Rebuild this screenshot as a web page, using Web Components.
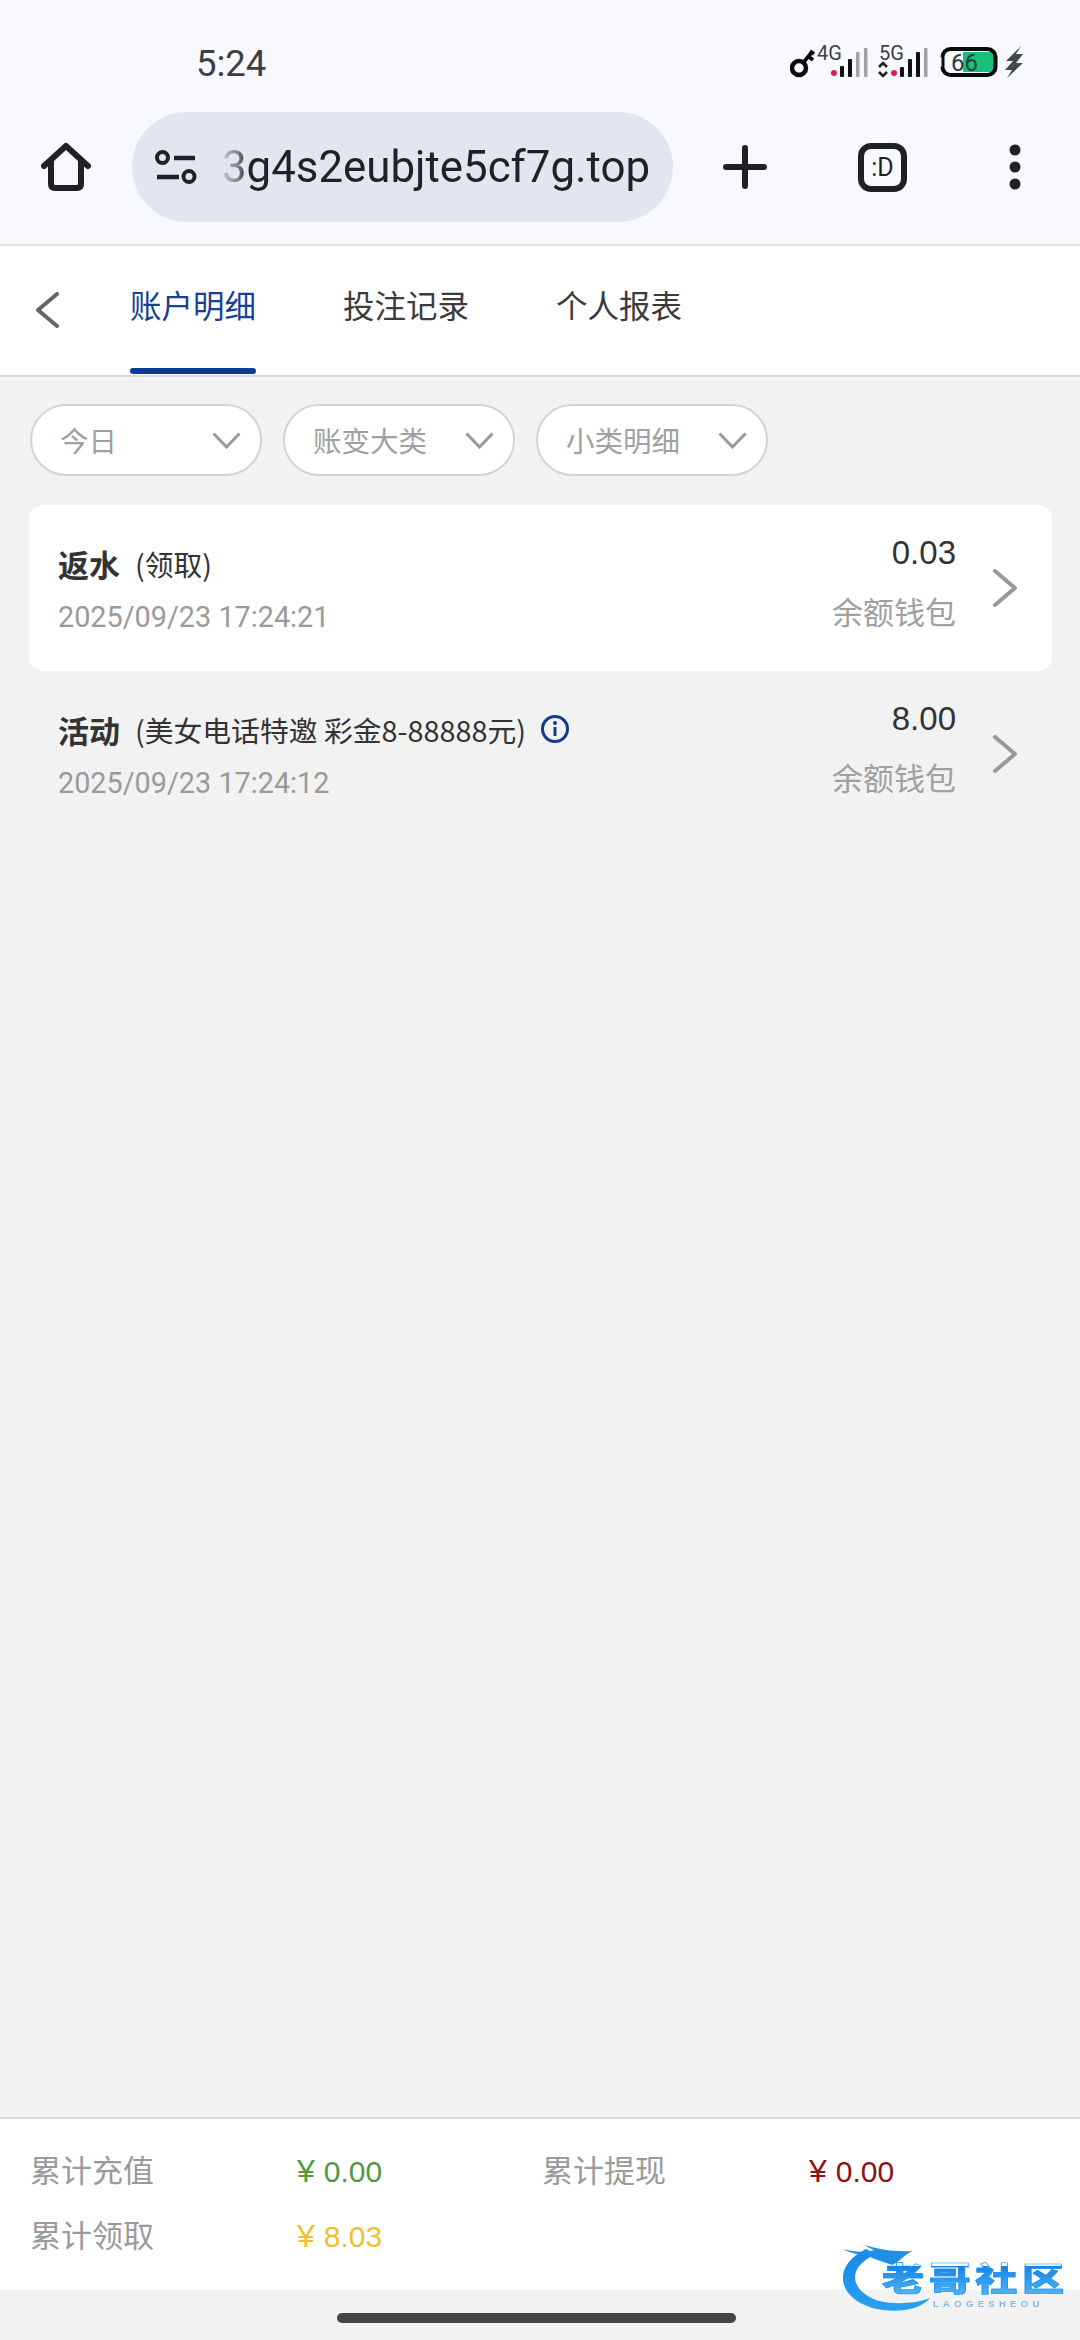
<!DOCTYPE html>
<html lang="zh">
<head>
<meta charset="utf-8">
<title>账户明细</title>
<style>
  html, body { margin: 0; height: 100%; }
  body {
    background: #f2f2f2;
    font-family: "Noto Sans CJK SC", "Noto Sans", sans-serif;
  }
  #app { display: flex; flex-direction: column; height: 2340px; width: 1080px; position: relative; overflow: hidden; }
</style>
</head>
<body>
<div id="app">
  <browser-header url="3g4s2eubjte5cf7g.top" time="5:24"></browser-header>
  <tab-nav>
    <tab-item active>账户明细</tab-item>
    <tab-item>投注记录</tab-item>
    <tab-item>个人报表</tab-item>
  </tab-nav>
  <filter-row>
    <filter-pill>今日</filter-pill>
    <filter-pill>账变大类</filter-pill>
    <filter-pill>小类明细</filter-pill>
  </filter-row>
  <record-list>
    <record-row active title-text="返水" note="(领取)" date="2025/09/23 17:24:21" amount="0.03" wallet="余额钱包"></record-row>
    <record-row info title-text="活动" note="(美女电话特邀 彩金8-88888元)" date="2025/09/23 17:24:12" amount="8.00" wallet="余额钱包"></record-row>
  </record-list>
  <summary-footer>
    <summary-item label="累计充值" value="0.00" color="#4f9a3e"></summary-item>
    <summary-item label="累计提现" value="0.00" color="#8e1010"></summary-item>
    <summary-item label="累计领取" value="8.03" color="#efc02e"></summary-item>
  </summary-footer>
  <home-indicator></home-indicator>
  <logo-mark></logo-mark>
</div>

<script>
class BrowserHeader extends HTMLElement {
  constructor() {
    super();
    this.attachShadow({ mode: 'open' });
  }
  connectedCallback() {
    this.shadowRoot.innerHTML = /*html*/`
    <style>
      :host { display: block; height: 244px; background: #f8f9fe; border-bottom: 2px solid #e1e3ea; flex: none; }
      .status { height: 112px; display: flex; box-sizing: border-box; padding: 45px 0 0 196px; }
      .time { font: 36.5px/38px Roboto, sans-serif; color: #3c4043; }
      .icons { margin-left: 524px; margin-top: -5px; flex: none; }
      .bar { height: 110px; display: flex; align-items: center; }
      .home { margin-left: 41px; width: 50px; height: 50px; flex: none; }
      .omni {
        margin-left: 41px; width: 541px; height: 110px; border-radius: 55px;
        background: #e2e6ef; display: flex; align-items: center; flex: none;
      }
      .tune { margin-left: 23px; width: 42px; height: 34px; flex: none; }
      .url {
        margin-left: 25px; font: 43.8px/52px Roboto, sans-serif; color: #1f2125;
        white-space: nowrap;
        -webkit-mask-image: linear-gradient(90deg, rgba(0,0,0,.15) 0, rgba(0,0,0,.5) 16px, #000 26px);
        mask-image: linear-gradient(90deg, rgba(0,0,0,.15) 0, rgba(0,0,0,.5) 16px, #000 26px);
      }
      .plus { margin-left: 50px; width: 44px; height: 44px; flex: none; }
      .tabs {
        margin-left: 91px; width: 49px; height: 49px; box-sizing: border-box; flex: none;
        border: 6px solid #1f2125; border-radius: 13px;
        display: flex; align-items: center; justify-content: center;
        font: 400 25px/1 Roboto, sans-serif; color: #1f2125;
      }
      .menu { margin-left: 102px; width: 12px; height: 46px; flex: none; }
    </style>
    <div class="status">
      <span class="time">${this.getAttribute('time')}</span>
      <svg class="icons" width="236" height="40" viewBox="0 -6 236 40">
        <!-- key -->
        <circle cx="9" cy="22" r="7" fill="none" stroke="#0a0a0a" stroke-width="4.5"/>
        <path d="M13 17 L22 6 M18 10 L23 14 M20 5 L24 8" stroke="#0a0a0a" stroke-width="3.6" fill="none"/>
        <text x="27" y="14" font-family="Roboto, sans-serif" font-size="20" fill="#3c3f43">4G</text>
        <circle cx="44" cy="27" r="3" fill="#d8234f"/>
        <rect x="50" y="20" width="4" height="11" rx="1" fill="#111"/>
        <rect x="58" y="13" width="4" height="18" rx="1" fill="#111"/>
        <rect x="66" y="6" width="3.5" height="25" rx="1" fill="#a0a2a6"/>
        <rect x="74" y="2" width="3.5" height="29" rx="1" fill="#a0a2a6"/>
        <text x="89" y="14" font-family="Roboto, sans-serif" font-size="20" fill="#3c3f43">5G</text>
        <path d="M89 21 L93 17 L97 21 M89 26 L93 30 L97 26" stroke="#222" stroke-width="2.6" fill="none"/>
        <circle cx="104" cy="27" r="3" fill="#d8234f"/>
        <rect x="110" y="21" width="4" height="10" rx="1" fill="#111"/>
        <rect x="118" y="13" width="4" height="18" rx="1" fill="#111"/>
        <rect x="126" y="6" width="4" height="25" rx="1" fill="#111"/>
        <rect x="134" y="2" width="3.5" height="29" rx="1" fill="#a0a2a6"/>
        <!-- battery -->
        <g transform="translate(0 1)">
          <rect x="173" y="5" width="31" height="20" rx="1" fill="#17bf7a"/>
          <rect x="152.5" y="2" width="53" height="26" rx="8" fill="none" stroke="#0a0a0a" stroke-width="4"/>
          <rect x="148" y="10" width="3.5" height="10" rx="1" fill="#f8f9fe"/>
          <text x="161" y="24" font-family="Roboto, sans-serif" font-size="24" fill="#24403a">66</text>
        </g>
        <path d="M231 0 L216 15 L223 15 L215 24 L222 24 L217 32 L233 17 L226 17 L233 8 L226 8 Z" fill="#44474b"/>
      </svg>
    </div>
    <div class="bar">
      <svg class="home" viewBox="0 0 50 50">
        <path d="M3 24 L25 4 L47 24 M10 19 V42 Q10 46 14 46 H36 Q40 46 40 42 V19" fill="none" stroke="#1f2125" stroke-width="6" stroke-linecap="round" stroke-linejoin="round"/>
      </svg>
      <div class="omni">
        <svg class="tune" viewBox="0 0 42 34">
          <circle cx="7.5" cy="7.5" r="5.5" fill="none" stroke="#1f2125" stroke-width="4"/>
          <path d="M19 8 H40 M2 27 H24" stroke="#1f2125" stroke-width="4.5"/>
          <circle cx="34" cy="26.5" r="5.5" fill="none" stroke="#1f2125" stroke-width="4"/>
        </svg>
        <span class="url">${this.getAttribute('url')}</span>
      </div>
      <svg class="plus" viewBox="0 0 44 44">
        <path d="M22 3 V41 M3 22 H41" stroke="#1f2125" stroke-width="6" stroke-linecap="round"/>
      </svg>
      <div class="tabs">:D</div>
      <svg class="menu" viewBox="0 0 12 46">
        <circle cx="6" cy="6" r="5.5" fill="#1f2125"/>
        <circle cx="6" cy="23" r="5.5" fill="#1f2125"/>
        <circle cx="6" cy="40" r="5.5" fill="#1f2125"/>
      </svg>
    </div>`;
  }
}

class TabNav extends HTMLElement {
  constructor() {
    super();
    this.attachShadow({ mode: 'open' }).innerHTML = /*html*/`
    <style>
      :host { display: flex; height: 129px; background: #fff; border-bottom: 2px solid #d9d9d9; flex: none; }
      svg { margin: 46px 0 0 35px; width: 24px; height: 36px; flex: none; }
      .items { display: flex; gap: 87px; margin-left: 71px; }
    </style>
    <svg viewBox="0 0 24 36"><path d="M22 2 L3 18 L22 34" fill="none" stroke="#666" stroke-width="4" stroke-linecap="round" stroke-linejoin="round"/></svg>
    <div class="items"><slot></slot></div>`;
  }
}

class TabItem extends HTMLElement {
  constructor() {
    super();
    this.attachShadow({ mode: 'open' }).innerHTML = /*html*/`
    <style>
      :host {
        display: flex; flex-direction: column; justify-content: space-between;
        width: 126px; height: 129px; box-sizing: border-box; padding-top: 37px;
        font-size: 31.5px; line-height: 42px; color: #3b3b3b; white-space: nowrap;
      }
      :host([active]) { color: #1a3f95; }
      i { display: none; height: 6px; margin-bottom: 1px; border-radius: 3px; background: #0f3796; }
      :host([active]) i { display: block; }
    </style>
    <span><slot></slot></span><i></i>`;
  }
}

class FilterRow extends HTMLElement {
  constructor() {
    super();
    this.attachShadow({ mode: 'open' }).innerHTML = /*html*/`
    <style>:host { display: flex; gap: 21px; padding: 27px 30px 29px; flex: none; }</style>
    <slot></slot>`;
  }
}

class FilterPill extends HTMLElement {
  constructor() {
    super();
    this.attachShadow({ mode: 'open' }).innerHTML = /*html*/`
    <style>
      :host {
        display: flex; align-items: center; justify-content: space-between;
        width: 232px; height: 72px; box-sizing: border-box;
        padding: 0 19px 0 28px; background: #fff;
        border: 2px solid #d4d4d4; border-radius: 36px;
        font-size: 28.5px; color: #a0a0a0; white-space: nowrap;
      }
      span { padding-bottom: 2px; }
      svg { width: 29px; height: 17px; }
    </style>
    <span><slot></slot></span>
    <svg viewBox="0 0 29 17"><path d="M1.5 1.5 L14.5 15 L27.5 1.5" fill="none" stroke="#9a9a9a" stroke-width="3"/></svg>`;
  }
}

class RecordList extends HTMLElement {
  constructor() {
    super();
    this.attachShadow({ mode: 'open' }).innerHTML = /*html*/`
    <style>:host { display: block; flex: 1; padding: 0 28px 0 29px; }</style>
    <slot></slot>`;
  }
}

class RecordRow extends HTMLElement {
  constructor() {
    super();
    this.attachShadow({ mode: 'open' });
  }
  connectedCallback() {
    const info = this.hasAttribute('info') ? /*html*/`
      <svg class="info" viewBox="0 0 30 30">
        <circle cx="15" cy="15" r="12.5" fill="none" stroke="#123a8c" stroke-width="3"/>
        <circle cx="15" cy="9" r="2" fill="#123a8c"/>
        <path d="M15 13 V22" stroke="#123a8c" stroke-width="3"/>
      </svg>` : '';
    this.shadowRoot.innerHTML = /*html*/`
    <style>
      :host {
        display: flex; height: 166px; box-sizing: border-box; border-radius: 14px;
        padding: 0 35px 0 29px;
      }
      :host([active]) { background: #fff; }
      .left { flex: 1; padding-top: 38px; }
      .title { display: flex; align-items: center; height: 40px; color: #333; white-space: nowrap; }
      b { font-size: 31px; font-weight: 700; margin-right: 15px; }
      .note { font-size: 28.8px; }
      .info { width: 30px; height: 30px; margin-left: 14px; }
      .date { margin-top: 14px; font: 28.8px/40px Roboto, sans-serif; color: #9a9a9a; }
      .right { padding-top: 28px; display: flex; flex-direction: column; align-items: flex-end; }
      .amount { font: 33px/40px "Liberation Sans", sans-serif; color: #333; }
      .wallet { margin-top: 18px; font-size: 31px; line-height: 40px; color: #a0a0a0; }
      .go { width: 24px; height: 38px; margin: 64px 0 0 37px; flex: none; }
    </style>
    <div class="left">
      <div class="title"><b>${this.getAttribute('title-text')}</b><span class="note">${this.getAttribute('note')}</span>${info}</div>
      <div class="date">${this.getAttribute('date')}</div>
    </div>
    <div class="right">
      <div class="amount">${this.getAttribute('amount')}</div>
      <div class="wallet">${this.getAttribute('wallet')}</div>
    </div>
    <svg class="go" viewBox="0 0 24 38"><path d="M2 2 L22 19 L2 36" fill="none" stroke="#999" stroke-width="4" stroke-linecap="round" stroke-linejoin="round"/></svg>`;
  }
}

class SummaryFooter extends HTMLElement {
  constructor() {
    super();
    this.attachShadow({ mode: 'open' }).innerHTML = /*html*/`
    <style>
      :host {
        display: grid; grid-template-columns: 512px 1fr; grid-auto-rows: 65px;
        height: 173px; box-sizing: border-box; padding: 17px 0 0 30px;
        background: #fff; border-top: 2px solid #dcdcdc; flex: none;
      }
    </style>
    <slot></slot>`;
  }
}

class SummaryItem extends HTMLElement {
  constructor() {
    super();
    this.attachShadow({ mode: 'open' });
  }
  connectedCallback() {
    this.shadowRoot.innerHTML = /*html*/`
    <style>
      :host { display: flex; align-items: center; }
      .label { width: 267px; font-size: 31px; color: #9a9a9a; white-space: nowrap; }
      .value { padding-top: 5px; font: 30px/40px "Liberation Sans", sans-serif; color: ${this.getAttribute('color')}; white-space: nowrap; }
      .yen { margin-right: 9px; font-size: 32px; }
    </style>
    <span class="label">${this.getAttribute('label')}</span>
    <span class="value"><span class="yen">¥</span>${this.getAttribute('value')}</span>`;
  }
}

class HomeIndicator extends HTMLElement {
  constructor() {
    super();
    this.attachShadow({ mode: 'open' }).innerHTML = /*html*/`
    <style>
      :host { display: flex; justify-content: center; height: 50px; padding-top: 23px; box-sizing: border-box; flex: none; }
      i { width: 399px; height: 10px; margin-left: -8px; border-radius: 5px; background: #444; }
    </style>
    <i></i>`;
  }
}

// sits over the footer, like a watermark on the screenshot
class LogoMark extends HTMLElement {
  constructor() {
    super();
    this.attachShadow({ mode: 'open' }).innerHTML = /*html*/`
    <style>
      :host { position: absolute; left: 830px; top: 2230px; width: 250px; height: 90px; filter: blur(.6px); }
      svg { position: absolute; left: 0; top: 0; }
      .name {
        position: absolute; left: 52px; top: 32px; width: 182px;
        display: flex; justify-content: space-between;
      }
      .name span {
        display: block; font: 900 42px/36px "Liberation Sans", "Noto Sans CJK SC", sans-serif;
        transform: scaleY(.78);
        background: linear-gradient(#1583e6, #4db4f5);
        -webkit-background-clip: text; background-clip: text; color: transparent;
        -webkit-text-stroke: .8px #1e90ec;
      }
      .sub {
        position: absolute; left: 103px; top: 68px;
        font: 700 9.5px/11px "Liberation Sans", sans-serif; letter-spacing: 4.3px; color: #7dbcec; white-space: nowrap;
      }
    </style>
    <svg width="250" height="90" viewBox="0 0 250 90">
      <defs><linearGradient id="g" x1="0" y1="0" x2="0" y2="1"><stop offset="0" stop-color="#1688e8"/><stop offset="1" stop-color="#2ba0f0"/></linearGradient></defs>
      <path fill="url(#g)" d="M36 19 C20 27 12 38 13 50 C15 70 42 84 75 80 C88 78 96 73 100 68 C85 74 62 75 46 70 C30 64 22 52 26 42 C29 33 38 28 46 24 Z"/>
      <path fill="#1f90ea" d="M13 19 C24 22 34 23 44 20 C40 18 37 17 35 15 C48 19 62 22 83 21 C72 26 72 30 62 35 C55 32 46 30 38 26 C30 25 20 23 13 19 Z"/>
    </svg>
    <div class="name"><span>老</span><span>哥</span><span>社</span><span>区</span></div>
    <div class="sub">LAOGESHEOU</div>`;
  }
}

customElements.define('browser-header', BrowserHeader);
customElements.define('tab-nav', TabNav);
customElements.define('tab-item', TabItem);
customElements.define('filter-row', FilterRow);
customElements.define('filter-pill', FilterPill);
customElements.define('record-list', RecordList);
customElements.define('record-row', RecordRow);
customElements.define('summary-footer', SummaryFooter);
customElements.define('summary-item', SummaryItem);
customElements.define('home-indicator', HomeIndicator);
customElements.define('logo-mark', LogoMark);
</script>
</body>
</html>
